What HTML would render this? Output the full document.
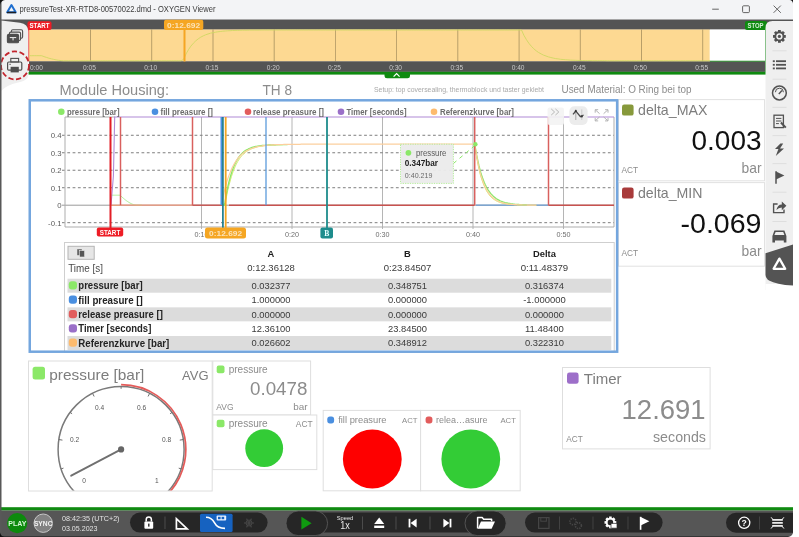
<!DOCTYPE html>
<html lang="en"><head><meta charset="utf-8"><title>pressureTest-XR-RTD8-00570022.dmd - OXYGEN Viewer</title>
<style>
html,body{margin:0;padding:0;background:#fff;overflow:hidden}
body{width:799px;height:537px;font-family:"Liberation Sans", sans-serif}
svg{display:block;position:absolute;left:0;top:0;filter:blur(0.35px)}
svg text{font-family:"Liberation Sans", sans-serif}
</style></head><body>
<svg width="799" height="537" viewBox="0 0 799 537">
<rect x="0" y="0" width="799" height="537" fill="#fff"/>
<rect x="0" y="0" width="793" height="19.5" fill="#f3f4f6"/>
<path d="M11.45,5 L15.7,12.3 L7.2,12.3 Z" fill="none" stroke="#1f6fd0" stroke-width="2" stroke-linejoin="round"/>
<path d="M7.6,12.5 L15.3,12.5" fill="none" stroke="#1c1f26" stroke-width="1.7" stroke-linecap="round"/>
<text x="19.5" y="12.2" font-size="8.4" fill="#3c3c3c" textLength="196" lengthAdjust="spacingAndGlyphs">pressureTest-XR-RTD8-00570022.dmd - OXYGEN Viewer</text>
<line x1="712.2" y1="9.2" x2="718.8" y2="9.2" stroke="#555" stroke-width="0.9"/>
<rect x="742.6" y="5.8" width="6.8" height="6.8" fill="none" rx="1" stroke="#555" stroke-width="0.9"/>
<path d="M773.6,5.6 L780.8,12.8 M780.8,5.6 L773.6,12.8" stroke="#555" stroke-width="0.9" fill="none"/>
<rect x="0" y="19.5" width="793" height="10.2" fill="#545454"/>
<rect x="29" y="29.5" width="680.8" height="32" fill="#fdd992"/>
<rect x="709.8" y="29.5" width="56.2" height="32" fill="#fff"/>
<rect x="29" y="61.3" width="737" height="10.6" fill="#545454"/>
<rect x="28.5" y="71.8" width="737.5" height="2.8" fill="#0f8a10"/>
<line x1="709.8" y1="61.2" x2="766" y2="61.2" stroke="#0f8a10" stroke-width="0.8"/>
<line x1="28.7" y1="27" x2="28.7" y2="61.3" stroke="#ea3a3a" stroke-width="1"/>
<line x1="765.6" y1="29.5" x2="765.6" y2="72" stroke="#0f8a10" stroke-width="1"/>
<line x1="90.5" y1="29.5" x2="90.5" y2="61.3" stroke="#7a6a44" stroke-width="0.7" opacity="0.75"/>
<text x="89.5" y="69.6" font-size="6.6" fill="#c9c9c9" text-anchor="middle">0:05</text>
<line x1="151.7" y1="29.5" x2="151.7" y2="61.3" stroke="#7a6a44" stroke-width="0.7" opacity="0.75"/>
<text x="150.7" y="69.6" font-size="6.6" fill="#c9c9c9" text-anchor="middle">0:10</text>
<line x1="213.0" y1="29.5" x2="213.0" y2="61.3" stroke="#7a6a44" stroke-width="0.7" opacity="0.75"/>
<text x="212.0" y="69.6" font-size="6.6" fill="#c9c9c9" text-anchor="middle">0:15</text>
<line x1="274.2" y1="29.5" x2="274.2" y2="61.3" stroke="#7a6a44" stroke-width="0.7" opacity="0.75"/>
<text x="273.2" y="69.6" font-size="6.6" fill="#c9c9c9" text-anchor="middle">0:20</text>
<line x1="335.4" y1="29.5" x2="335.4" y2="61.3" stroke="#7a6a44" stroke-width="0.7" opacity="0.75"/>
<text x="334.4" y="69.6" font-size="6.6" fill="#c9c9c9" text-anchor="middle">0:25</text>
<line x1="396.6" y1="29.5" x2="396.6" y2="61.3" stroke="#7a6a44" stroke-width="0.7" opacity="0.75"/>
<text x="395.6" y="69.6" font-size="6.6" fill="#c9c9c9" text-anchor="middle">0:30</text>
<line x1="457.8" y1="29.5" x2="457.8" y2="61.3" stroke="#7a6a44" stroke-width="0.7" opacity="0.75"/>
<text x="456.8" y="69.6" font-size="6.6" fill="#c9c9c9" text-anchor="middle">0:35</text>
<line x1="519.1" y1="29.5" x2="519.1" y2="61.3" stroke="#7a6a44" stroke-width="0.7" opacity="0.75"/>
<text x="518.1" y="69.6" font-size="6.6" fill="#c9c9c9" text-anchor="middle">0:40</text>
<line x1="580.3" y1="29.5" x2="580.3" y2="61.3" stroke="#7a6a44" stroke-width="0.7" opacity="0.75"/>
<text x="579.3" y="69.6" font-size="6.6" fill="#c9c9c9" text-anchor="middle">0:45</text>
<line x1="641.5" y1="29.5" x2="641.5" y2="61.3" stroke="#7a6a44" stroke-width="0.7" opacity="0.75"/>
<text x="640.5" y="69.6" font-size="6.6" fill="#c9c9c9" text-anchor="middle">0:50</text>
<line x1="702.7" y1="29.5" x2="702.7" y2="61.3" stroke="#7a6a44" stroke-width="0.7" opacity="0.75"/>
<text x="701.7" y="69.6" font-size="6.6" fill="#c9c9c9" text-anchor="middle">0:55</text>
<text x="30" y="69.6" font-size="6.6" fill="#c9c9c9">0:00</text>
<polyline points="29.3,55.7 31.7,55.7 34.2,55.7 36.6,55.7 39.1,55.7 41.5,55.7 44.0,56.6 46.4,57.4 48.9,58.2 51.3,58.8 53.8,59.4 56.2,59.9 58.7,60.3 61.1,60.6 63.6,60.8 66.0,60.8 68.5,60.8 70.9,60.8 73.4,60.8 75.8,60.8 78.3,60.8 80.7,60.8 83.2,60.8 85.6,60.8 88.1,60.8 90.5,60.8 93.0,60.8 95.4,60.8 97.9,60.8 100.3,60.8 102.8,60.8 105.2,60.8 107.7,60.8 110.1,60.8 112.6,60.8 115.0,60.8 117.4,60.8 119.9,60.8 122.3,60.8 124.8,60.8 127.2,60.8 129.7,60.8 132.1,60.8 134.6,60.8 137.0,60.8 139.5,60.8 141.9,60.8 144.4,60.8 146.8,60.8 149.3,60.8 151.7,60.8 154.2,60.8 156.6,60.8 159.1,60.8 161.5,60.8 164.0,60.8 166.4,60.8 168.9,60.8 171.3,60.8 173.8,60.8 176.2,60.8 178.7,60.8 181.1,60.8 183.6,59.3 186.0,54.0 188.5,49.6 190.9,46.1 193.4,43.2 195.8,40.8 198.3,38.8 200.7,37.2 203.2,35.9 205.6,34.8 208.0,34.0 210.5,33.2 212.9,32.7 215.4,32.2 217.8,31.8 220.3,31.5 222.7,31.2 225.2,31.0 227.6,30.8 230.1,30.7 232.5,30.5 235.0,30.4 237.4,30.4 239.9,30.3 242.3,30.2 244.8,30.2 247.2,30.2 249.7,30.1 252.1,30.1 254.6,30.1 257.0,30.1 259.5,30.1 261.9,30.0 264.4,30.0 266.8,30.0 269.3,30.0 271.7,30.0 274.2,30.0 276.6,30.0 279.1,30.0 281.5,30.0 284.0,30.0 286.4,30.0 288.9,30.0 291.3,30.0 293.7,30.0 296.2,30.0 298.6,30.0 301.1,30.0 303.5,30.0 306.0,30.0 308.4,30.0 310.9,30.0 313.3,30.0 315.8,30.0 318.2,30.0 320.7,30.0 323.1,30.0 325.6,30.0 328.0,30.0 330.5,30.0 332.9,30.0 335.4,30.0 337.8,30.0 340.3,30.0 342.7,30.0 345.2,30.0 347.6,30.0 350.1,30.0 352.5,30.0 355.0,30.0 357.4,30.0 359.9,30.0 362.3,30.0 364.8,30.0 367.2,30.0 369.7,30.0 372.1,30.0 374.6,30.0 377.0,30.0 379.4,30.0 381.9,30.0 384.3,30.0 386.8,30.0 389.2,30.0 391.7,30.0 394.1,30.0 396.6,30.0 399.0,30.0 401.5,30.0 403.9,30.0 406.4,30.0 408.8,30.0 411.3,30.0 413.7,30.0 416.2,30.0 418.6,30.0 421.1,30.0 423.5,30.0 426.0,30.0 428.4,30.0 430.9,30.0 433.3,30.0 435.8,30.0 438.2,30.0 440.7,30.0 443.1,30.0 445.6,30.0 448.0,30.0 450.5,30.0 452.9,30.0 455.4,30.0 457.8,30.0 460.3,30.0 462.7,30.0 465.2,30.0 467.6,30.0 470.0,30.0 472.5,30.0 474.9,30.0 477.4,30.0 479.8,30.0 482.3,30.0 484.7,30.0 487.2,30.0 489.6,30.0 492.1,30.0 494.5,30.0 497.0,30.0 499.4,30.0 501.9,30.0 504.3,30.0 506.8,30.0 509.2,30.0 511.7,30.0 514.1,30.0 516.6,30.0 519.0,30.0 521.5,30.0 523.9,35.3 526.4,39.6 528.8,43.2 531.3,46.2 533.7,48.7 536.2,50.8 538.6,52.5 541.1,53.9 543.5,55.1 546.0,56.0 548.4,56.9 550.9,57.5 553.3,58.1 555.7,58.6 558.2,58.9 560.6,59.3 563.1,59.5 565.5,59.7 568.0,59.9 570.4,60.1 572.9,60.2 575.3,60.3 577.8,60.4 580.2,60.5 582.7,60.5 585.1,60.6 587.6,60.6 590.0,60.6 592.5,60.7 594.9,60.7 597.4,60.7 599.8,60.7 602.3,60.7 604.7,60.7 607.2,60.8 609.6,60.8 612.1,60.8 614.5,60.8 617.0,60.8 619.4,60.8 621.9,60.8 624.3,60.8 626.8,60.8 629.2,60.8 631.7,60.8 634.1,60.8 636.6,60.8 639.0,60.8 641.5,60.8 643.9,60.8 646.3,60.8 648.8,60.8 651.2,60.8 653.7,60.8 656.1,60.8 658.6,60.8 661.0,60.8 663.5,60.8 665.9,60.8 668.4,60.8 670.8,60.8 673.3,60.8 675.7,60.8 678.2,60.8 680.6,60.8 683.1,60.8 685.5,60.8 688.0,60.8 690.4,60.8 692.9,60.8 695.3,60.8 697.8,60.8 700.2,60.8 702.7,60.8 705.1,60.8 707.6,60.8 710.0,60.8" fill="none" stroke="#cfd862" stroke-width="0.9"/>
<rect x="27.5" y="21.3" width="24" height="8.6" fill="#ee1c25" rx="2"/>
<text x="39.5" y="28.3" font-size="6.3" fill="#fff" text-anchor="middle" font-weight="bold" textLength="20" lengthAdjust="spacingAndGlyphs">START</text>
<rect x="745" y="21" width="22" height="9" fill="#0f8a10" rx="2"/>
<text x="755.5" y="28.2" font-size="6.3" fill="#d8f0d8" text-anchor="middle" font-weight="bold" textLength="16" lengthAdjust="spacingAndGlyphs">STOP</text>
<rect x="183.5" y="29.5" width="2" height="32" fill="#f5a623"/>
<rect x="164" y="19.7" width="39.3" height="10.4" fill="#f5a623" rx="2"/>
<text x="183.6" y="27.9" font-size="7.4" fill="#fce3b8" text-anchor="middle" font-weight="bold" textLength="33" lengthAdjust="spacingAndGlyphs">0:12.692</text>
<path d="M384.5,74 L410,74 L410,76 Q410,78.2 407.5,78.2 L387,78.2 Q384.5,78.2 384.5,76 Z" fill="#0f8a10"/>
<path d="M393.6,76.6 L396.6,73.6 L399.6,76.6" fill="none" stroke="#fff" stroke-width="1.2"/>
<path d="M1.2,20.6 L20,22.8 Q28.2,23.8 28.2,31.5 L28.2,75.5 Q28.2,79.6 22,81.4 Q5,85.2 1.2,91 Z" fill="#efefef"/>
<rect x="11.4" y="29.799999999999997" width="11.2" height="8.4" fill="#efefef" rx="1.4" stroke="#4e4e4e" stroke-width="1.1"/>
<rect x="9.4" y="32.1" width="11.2" height="8.4" fill="#efefef" rx="1.4" stroke="#4e4e4e" stroke-width="1.1"/>
<rect x="7.4" y="34.4" width="11.2" height="8.4" fill="#4e4e4e" rx="1.4" stroke="#4e4e4e" stroke-width="1.1"/>
<rect x="9.8" y="37" width="6.4" height="1.1" fill="#e4e4e4"/>
<rect x="12.5" y="37" width="1.1" height="3.4" fill="#e4e4e4"/>
<circle cx="15" cy="65.4" r="14" fill="none" stroke="#c2242c" stroke-width="1.8" stroke-dasharray="5.2 2.6"/>
<rect x="7.6" y="62" width="14.2" height="8.2" fill="none" rx="1.2" stroke="#4e4e4e" stroke-width="1.2"/>
<rect x="10.8" y="58.4" width="7.8" height="3.6" fill="none" stroke="#4e4e4e" stroke-width="1.1"/>
<rect x="10.6" y="66.8" width="8.2" height="5.6" fill="#4e4e4e"/>
<rect x="9.4" y="63.8" width="1.4" height="1" fill="#4e4e4e"/>
<path d="M765.5,290 L765.5,28 Q765.5,21 772.5,21 L793,21 L793,290 Z" fill="#efefef"/>
<rect x="765.5" y="284" width="27.5" height="10" fill="#fff"/>
<path d="M765.5,253.2 L793,244.4 L793,285.6 Q776,284.5 769,280.4 Q765.5,278.2 765.5,274.5 Z" fill="#545454"/>
<line x1="772.5" y1="50.8" x2="786.5" y2="50.8" stroke="#d9d9d9" stroke-width="0.8"/>
<line x1="772.5" y1="79.2" x2="786.5" y2="79.2" stroke="#d9d9d9" stroke-width="0.8"/>
<line x1="772.5" y1="107.4" x2="786.5" y2="107.4" stroke="#d9d9d9" stroke-width="0.8"/>
<line x1="772.5" y1="135.6" x2="786.5" y2="135.6" stroke="#d9d9d9" stroke-width="0.8"/>
<line x1="772.5" y1="163.6" x2="786.5" y2="163.6" stroke="#d9d9d9" stroke-width="0.8"/>
<line x1="772.5" y1="192.2" x2="786.5" y2="192.2" stroke="#d9d9d9" stroke-width="0.8"/>
<line x1="772.5" y1="221.5" x2="786.5" y2="221.5" stroke="#d9d9d9" stroke-width="0.8"/>
<g transform="translate(779.4,36.4)">
<rect x="-1.4" y="-6.4" width="2.8" height="2.8" fill="#525252" transform="rotate(0)"/>
<rect x="-1.4" y="-6.4" width="2.8" height="2.8" fill="#525252" transform="rotate(45)"/>
<rect x="-1.4" y="-6.4" width="2.8" height="2.8" fill="#525252" transform="rotate(90)"/>
<rect x="-1.4" y="-6.4" width="2.8" height="2.8" fill="#525252" transform="rotate(135)"/>
<rect x="-1.4" y="-6.4" width="2.8" height="2.8" fill="#525252" transform="rotate(180)"/>
<rect x="-1.4" y="-6.4" width="2.8" height="2.8" fill="#525252" transform="rotate(225)"/>
<rect x="-1.4" y="-6.4" width="2.8" height="2.8" fill="#525252" transform="rotate(270)"/>
<rect x="-1.4" y="-6.4" width="2.8" height="2.8" fill="#525252" transform="rotate(315)"/>
<circle r="4.1" fill="none" stroke="#525252" stroke-width="1.9"/><circle r="1.6" fill="#525252"/></g>
<rect x="772.8" y="60.3" width="2" height="1.8" fill="#525252"/>
<rect x="776.0" y="60.3" width="10" height="1.8" fill="#525252"/>
<rect x="772.8" y="63.9" width="2" height="1.8" fill="#525252"/>
<rect x="776.0" y="63.9" width="10" height="1.8" fill="#525252"/>
<rect x="772.8" y="67.49999999999999" width="2" height="1.8" fill="#525252"/>
<rect x="776.0" y="67.49999999999999" width="10" height="1.8" fill="#525252"/>
<circle cx="779.4" cy="93" r="6.9" fill="none" stroke="#525252" stroke-width="1.5"/>
<path d="M778.8,94 L782.0,90.6" stroke="#525252" stroke-width="1.4"/>
<path d="M775.4,92.2 A4,4 0 0 1 783.4,92.2" fill="none" stroke="#525252" stroke-width="1"/>
<rect x="774.0" y="115.2" width="9.4" height="12.4" fill="none" stroke="#525252" stroke-width="1.3"/>
<line x1="776.0" y1="118.4" x2="781.4" y2="118.4" stroke="#525252" stroke-width="1"/>
<line x1="776.0" y1="121" x2="781.4" y2="121" stroke="#525252" stroke-width="1"/>
<line x1="776.0" y1="123.6" x2="778.9" y2="123.6" stroke="#525252" stroke-width="1"/>
<path d="M780.9,122.5 L785.8,127.6" stroke="#525252" stroke-width="2"/>
<path d="M780.4,143.4 L775.0,149 L778.4,149 L775.8,156 L784.0,148.6 L780.0,148.6 L783.1999999999999,143.4 Z" fill="#525252"/>
<path d="M776.0,171.2 L776.0,183.8" stroke="#525252" stroke-width="1.5"/>
<path d="M776.0,171.4 L784.4,175.4 L776.0,179.4 Z" fill="#525252"/>
<path d="M777.6,204 L773.6,204 L773.6,212.6 L784.0,212.6 L784.0,209.4" fill="none" stroke="#525252" stroke-width="1.4"/>
<path d="M776.4,210 Q777.4,204.4 781.8,204.4 L781.8,201.4 L786.4,205.8 L781.8,210.2 L781.8,207.4 Q778.4,207.4 776.4,210 Z" fill="#525252"/>
<path d="M772.4,236 L774.4,230.6 L784.4,230.6 L786.4,236 L786.4,242.6 L783.8,242.6 L783.8,240.6 L775.0,240.6 L775.0,242.6 L772.4,242.6 Z" fill="#525252"/>
<path d="M774.4,235 L775.6,232 L783.1999999999999,232 L784.4,235 Z" fill="#efefef"/>
<path d="M779.4,258.6 L785.1999999999999,268.8 L773.6,268.8 Z" fill="none" stroke="#fff" stroke-width="2.3" stroke-linejoin="round"/>
<text x="59.5" y="94.6" font-size="14.8" fill="#8c8c8c" textLength="109.5" lengthAdjust="spacingAndGlyphs">Module Housing:</text>
<text x="262.5" y="94.6" font-size="14.8" fill="#8c8c8c" textLength="29.5" lengthAdjust="spacingAndGlyphs">TH 8</text>
<text x="374" y="91.6" font-size="6.4" fill="#a9a9a9" textLength="170" lengthAdjust="spacingAndGlyphs">Setup: top coversealing, thermoblock und taster geklebt</text>
<text x="561.5" y="92.6" font-size="10.2" fill="#8c8c8c" textLength="130" lengthAdjust="spacingAndGlyphs">Used Material: O Ring bei top</text>
<rect x="618.5" y="99.6" width="146" height="81.2" fill="#fff" stroke="#e2e2e2" stroke-width="1"/>
<rect x="622" y="104.6" width="11.6" height="11" fill="#87993b" rx="2.2"/>
<text x="638" y="115" font-size="14.6" fill="#7d7d7d" textLength="69.4" lengthAdjust="spacingAndGlyphs">delta_MAX</text>
<text x="761.5" y="150.4" font-size="27.4" fill="#111" text-anchor="end" textLength="70" lengthAdjust="spacingAndGlyphs">0.003</text>
<text x="621.4" y="173.4" font-size="9.3" fill="#8c8c8c" textLength="16.6" lengthAdjust="spacingAndGlyphs">ACT</text>
<text x="761.5" y="173.2" font-size="14.2" fill="#8c8c8c" text-anchor="end" textLength="20" lengthAdjust="spacingAndGlyphs">bar</text>
<rect x="618.5" y="182.6" width="146" height="83.6" fill="#fff" stroke="#e2e2e2" stroke-width="1"/>
<rect x="622" y="187.6" width="11.6" height="11" fill="#a83a3a" rx="2.2"/>
<text x="638" y="198" font-size="14.6" fill="#7d7d7d" textLength="64.5" lengthAdjust="spacingAndGlyphs">delta_MIN</text>
<text x="761.5" y="233.4" font-size="27.4" fill="#111" text-anchor="end" textLength="81" lengthAdjust="spacingAndGlyphs">-0.069</text>
<text x="621.4" y="256.4" font-size="9.3" fill="#8c8c8c" textLength="16.6" lengthAdjust="spacingAndGlyphs">ACT</text>
<text x="761.5" y="256.2" font-size="14.2" fill="#8c8c8c" text-anchor="end" textLength="20" lengthAdjust="spacingAndGlyphs">bar</text>
<rect x="65" y="117" width="549" height="110" fill="#fff"/>
<line x1="201.5" y1="117" x2="201.5" y2="229" stroke="#b5b5b5" stroke-width="1"/>
<line x1="292.0" y1="117" x2="292.0" y2="229" stroke="#b5b5b5" stroke-width="1"/>
<line x1="382.5" y1="117" x2="382.5" y2="229" stroke="#b5b5b5" stroke-width="1"/>
<line x1="473.0" y1="117" x2="473.0" y2="229" stroke="#b5b5b5" stroke-width="1"/>
<line x1="563.5" y1="117" x2="563.5" y2="229" stroke="#b5b5b5" stroke-width="1"/>
<line x1="62" y1="135.28" x2="614" y2="135.28" stroke="#7e7e7e" stroke-width="1" stroke-dasharray="2.8 2.5"/>
<line x1="62" y1="152.76" x2="614" y2="152.76" stroke="#7e7e7e" stroke-width="1" stroke-dasharray="2.8 2.5"/>
<line x1="62" y1="170.24" x2="614" y2="170.24" stroke="#7e7e7e" stroke-width="1" stroke-dasharray="2.8 2.5"/>
<line x1="62" y1="187.72" x2="614" y2="187.72" stroke="#7e7e7e" stroke-width="1" stroke-dasharray="2.8 2.5"/>
<line x1="62" y1="222.68" x2="614" y2="222.68" stroke="#7e7e7e" stroke-width="1" stroke-dasharray="2.8 2.5"/>
<line x1="62" y1="205.2" x2="614" y2="205.2" stroke="#9a9a9a" stroke-width="1"/>
<text x="61.5" y="138.1" font-size="7.8" fill="#5c5c5c" text-anchor="end">0.4</text>
<text x="61.5" y="155.6" font-size="7.8" fill="#5c5c5c" text-anchor="end">0.3</text>
<text x="61.5" y="173.0" font-size="7.8" fill="#5c5c5c" text-anchor="end">0.2</text>
<text x="61.5" y="190.5" font-size="7.8" fill="#5c5c5c" text-anchor="end">0.1</text>
<text x="61.5" y="208.0" font-size="7.8" fill="#5c5c5c" text-anchor="end">0</text>
<text x="61.5" y="225.5" font-size="7.8" fill="#5c5c5c" text-anchor="end">-0.1</text>
<path d="M65,117 L65,227 L614,227 L614,117" fill="none" stroke="#adadad" stroke-width="1"/>
<text x="201.5" y="236.6" font-size="7.2" fill="#6e6e6e" text-anchor="middle">0:10</text>
<text x="292.0" y="236.6" font-size="7.2" fill="#6e6e6e" text-anchor="middle">0:20</text>
<text x="382.5" y="236.6" font-size="7.2" fill="#6e6e6e" text-anchor="middle">0:30</text>
<text x="473.0" y="236.6" font-size="7.2" fill="#6e6e6e" text-anchor="middle">0:40</text>
<text x="563.5" y="236.6" font-size="7.2" fill="#6e6e6e" text-anchor="middle">0:50</text>
<line x1="476" y1="205.2" x2="548.5" y2="205.2" stroke="#6d9fd6" stroke-width="1.2"/>
<polyline points="222.3,205.2 223.2,205.2 224.1,205.2 225.0,205.2 225.9,199.9 226.8,195.1 227.7,190.7 228.6,186.7 229.6,183.0 230.5,179.7 231.4,176.6 232.3,173.9 233.2,171.3 234.1,169.0 235.0,166.9 235.9,164.9 236.8,163.1 237.7,161.5 238.6,160.1 239.5,158.7 240.4,157.5 241.3,156.4 242.2,155.3 243.1,154.4 244.0,153.5 244.9,152.8 245.8,152.0 246.7,151.4 247.7,150.8 248.6,150.3 249.5,149.8 250.4,149.3 251.3,148.9 252.2,148.5 253.1,148.2 254.0,147.9 254.9,147.6 255.8,147.3 256.7,147.1 257.6,146.8 258.5,146.6 259.4,146.5 260.3,146.3 261.2,146.1 262.1,146.0 263.0,145.9 263.9,145.8 264.9,145.7 265.8,145.6 266.7,145.5 267.6,145.4 268.5,145.3 269.4,145.2 270.3,145.2 271.2,145.1 272.1,145.1 273.0,145.0 273.9,145.0 274.8,145.0 275.7,144.9 276.6,144.9 277.5,144.9 278.4,144.8 279.3,144.8 280.2,144.8 281.1,144.8 282.0,144.7 283.0,144.7" fill="none" stroke="#d3ea6a" stroke-width="1.0" opacity="1" stroke-linejoin="round"/>
<polyline points="473.9,144.5 474.8,144.5 475.7,150.9 476.6,156.6 477.5,161.7 478.4,166.3 479.3,170.4 480.2,174.1 481.1,177.3 482.1,180.3 483.0,182.9 483.9,185.2 484.8,187.3 485.7,189.2 486.6,190.9 487.5,192.4 488.4,193.7 489.3,194.9 490.2,196.0 491.1,197.0 492.0,197.9 492.9,198.6 493.8,199.3 494.7,199.9 495.6,200.5 496.5,201.0 497.4,201.4 498.3,201.8 499.2,202.2 500.2,202.5 501.1,202.8 502.0,203.0 502.9,203.3 503.8,203.5 504.7,203.6 505.6,203.8 506.5,204.0 507.4,204.1 508.3,204.2 509.2,204.3 510.1,204.4 511.0,204.5 511.9,204.6 512.8,204.6 513.7,204.7 514.6,204.7 515.5,204.8 516.4,204.8 517.3,204.9 518.3,204.9 519.2,204.9 520.1,205.0 521.0,205.0 521.9,205.0 522.8,205.0 523.7,205.0 524.6,205.1 525.5,205.1 526.4,205.1 527.3,205.1 528.2,205.1 529.1,205.1 530.0,205.1 530.9,205.1 531.8,205.1 532.7,205.2 533.6,205.2 534.5,205.2 535.4,205.2 536.4,205.2" fill="none" stroke="#d3ea6a" stroke-width="1.0" opacity="1" stroke-linejoin="round"/>
<polyline points="111.0,195.2 111.9,195.2 112.8,195.2 113.7,195.2 114.6,195.2 115.5,195.2 116.4,195.2 117.3,195.2 118.2,195.2 119.1,195.2 120.0,195.2 121.0,196.1 121.9,196.9 122.8,197.8 123.7,198.5 124.6,199.3 125.5,200.0 126.4,200.7 127.3,201.3 128.2,201.9 129.1,202.5 130.0,203.0 130.9,203.5 131.8,203.9 132.7,204.3 133.6,204.6 134.5,204.9 135.4,205.1 136.3,205.2 137.2,205.2 138.2,205.2 139.1,205.2 140.0,205.2 140.9,205.2 141.8,205.2" fill="none" stroke="#aef094" stroke-width="1.0" opacity="1" stroke-linejoin="round"/>
<polyline points="222.3,205.2 223.2,205.2 224.1,205.2 225.0,202.2 225.9,196.8 226.8,191.8 227.7,187.3 228.6,183.2 229.6,179.5 230.5,176.2 231.4,173.2 232.3,170.5 233.2,168.0 234.1,165.8 235.0,163.8 235.9,161.9 236.8,160.3 237.7,158.8 238.6,157.4 239.5,156.2 240.4,155.1 241.3,154.1 242.2,153.2 243.1,152.4 244.0,151.6 244.9,150.9 245.8,150.3 246.7,149.8 247.7,149.3 248.6,148.8 249.5,148.4 250.4,148.1 251.3,147.7 252.2,147.4 253.1,147.1 254.0,146.9 254.9,146.7 255.8,146.5 256.7,146.3 257.6,146.1 258.5,146.0 259.4,145.8 260.3,145.7 261.2,145.6 262.1,145.5 263.0,145.4 263.9,145.3 264.9,145.3 265.8,145.2 266.7,145.1 267.6,145.1 268.5,145.0 269.4,145.0 270.3,144.9 271.2,144.9 272.1,144.9 273.0,144.8 273.9,144.8 274.8,144.8 275.7,144.8 276.6,144.7 277.5,144.7 278.4,144.7 279.3,144.7 280.2,144.7 281.1,144.7 282.0,144.7 283.0,144.6 283.9,144.6 284.8,144.6 285.7,144.6 286.6,144.6 287.5,144.6" fill="none" stroke="#8be868" stroke-width="1.3" opacity="1" stroke-linejoin="round"/>
<polyline points="474.4,144.5 475.3,147.3 476.2,152.5 477.1,157.2 478.0,161.5 478.9,165.4 479.8,168.9 480.7,172.2 481.6,175.1 482.5,177.8 483.4,180.2 484.3,182.5 485.2,184.5 486.1,186.3 487.0,188.0 487.9,189.6 488.8,191.0 489.7,192.2 490.6,193.4 491.6,194.4 492.5,195.4 493.4,196.3 494.3,197.1 495.2,197.8 496.1,198.5 497.0,199.1 497.9,199.6 498.8,200.1 499.7,200.6 500.6,201.0 501.5,201.3 502.4,201.7 503.3,202.0 504.2,202.3 505.1,202.6 506.0,202.8 506.9,203.0 507.8,203.2 508.7,203.4 509.7,203.5 510.6,203.7 511.5,203.8 512.4,203.9 513.3,204.1 514.2,204.2 515.1,204.3 516.0,204.3 516.9,204.4 517.8,204.5 518.7,204.5 519.6,204.6 520.5,204.7 521.4,204.7 522.3,204.8 523.2,204.8 524.1,204.8 525.0,204.9 525.9,204.9 526.8,204.9" fill="none" stroke="#8be868" stroke-width="1.3" opacity="1" stroke-linejoin="round"/>
<polyline points="220.5,205.2 221.4,205.2 222.3,200.5 223.2,196.2 224.1,192.2 225.0,188.5 225.9,185.1 226.8,181.9 227.7,179.0 228.6,176.4 229.6,173.9 230.5,171.6 231.4,169.5 232.3,167.6 233.2,165.8 234.1,164.1 235.0,162.6 235.9,161.2 236.8,159.9 237.7,158.6 238.6,157.5 239.5,156.5 240.4,155.6 241.3,154.7 242.2,153.9 243.1,153.1 244.0,152.5 244.9,151.8 245.8,151.2 246.7,150.7 247.7,150.2 248.6,149.7 249.5,149.3 250.4,148.9 251.3,148.5 252.2,148.2 253.1,147.9 254.0,147.6 254.9,147.4 255.8,147.1 256.7,146.9 257.6,146.7 258.5,146.5 259.4,146.3 260.3,146.2 261.2,146.0 262.1,145.9 263.0,145.7 263.9,145.6 264.9,145.5 265.8,145.4 266.7,145.3 267.6,145.2 268.5,145.1 269.4,145.1 270.3,145.0 271.2,144.9 272.1,144.9 273.0,144.8 273.9,144.8 274.8,144.7 275.7,144.7 276.6,144.7 277.5,144.6 278.4,144.6 279.3,144.6 280.2,144.5 281.1,144.5 282.0,144.5 283.0,144.5 283.9,144.4 284.8,144.4 285.7,144.4 286.6,144.4 287.5,144.4 288.4,144.4 289.3,144.3 290.2,144.3 291.1,144.3 292.0,144.3 292.9,144.3 293.8,144.3 294.7,144.3 295.6,144.3 296.5,144.3 297.4,144.3 298.3,144.3 299.2,144.3 300.1,144.3 301.1,144.2 302.0,144.2 302.9,144.2 303.8,144.2 304.7,144.2 305.6,144.2 306.5,144.2 307.4,144.2 308.3,144.2 309.2,144.2 310.1,144.2 311.0,144.2 311.9,144.2 312.8,144.2 313.7,144.2 314.6,144.2 315.5,144.2 316.4,144.2 317.3,144.2 318.2,144.2 319.2,144.2 320.1,144.2 321.0,144.2 321.9,144.2 322.8,144.2 323.7,144.2 324.6,144.2 325.5,144.2 326.4,144.2 327.3,144.2 328.2,144.2 329.1,144.2 330.0,144.2 330.9,144.2 331.8,144.2 332.7,144.2 333.6,144.2 334.5,144.2 335.4,144.2 336.3,144.2 337.3,144.2 338.2,144.2 339.1,144.2 340.0,144.2 340.9,144.2 341.8,144.2 342.7,144.2 343.6,144.2 344.5,144.2 345.4,144.2 346.3,144.2 347.2,144.2 348.1,144.2 349.0,144.2 349.9,144.2 350.8,144.2 351.7,144.2 352.6,144.2 353.5,144.2 354.4,144.2 355.4,144.2 356.3,144.2 357.2,144.2 358.1,144.2 359.0,144.2 359.9,144.2 360.8,144.2 361.7,144.2 362.6,144.2 363.5,144.2 364.4,144.2 365.3,144.2 366.2,144.2 367.1,144.2 368.0,144.2 368.9,144.2 369.8,144.2 370.7,144.2 371.6,144.2 372.5,144.2 373.5,144.2 374.4,144.2 375.3,144.2 376.2,144.2 377.1,144.2 378.0,144.2 378.9,144.2 379.8,144.2 380.7,144.2 381.6,144.2 382.5,144.2 383.4,144.2 384.3,144.2 385.2,144.2 386.1,144.2 387.0,144.2 387.9,144.2 388.8,144.2 389.7,144.2 390.6,144.2 391.6,144.2 392.5,144.2 393.4,144.2 394.3,144.2 395.2,144.2 396.1,144.2 397.0,144.2 397.9,144.2 398.8,144.2 399.7,144.2 400.6,144.2 401.5,144.2 402.4,144.2 403.3,144.2 404.2,144.2 405.1,144.2 406.0,144.2 406.9,144.2 407.8,144.2 408.7,144.2 409.7,144.2 410.6,144.2 411.5,144.2 412.4,144.2 413.3,144.2 414.2,144.2 415.1,144.2 416.0,144.2 416.9,144.2 417.8,144.2 418.7,144.2 419.6,144.2 420.5,144.2 421.4,144.2 422.3,144.2 423.2,144.2 424.1,144.2 425.0,144.2 425.9,144.2 426.8,144.2 427.8,144.2 428.7,144.2 429.6,144.2 430.5,144.2 431.4,144.2 432.3,144.2 433.2,144.2 434.1,144.2 435.0,144.2 435.9,144.2 436.8,144.2 437.7,144.2 438.6,144.2 439.5,144.2 440.4,144.2 441.3,144.2 442.2,144.2 443.1,144.2 444.0,144.2 444.9,144.2 445.9,144.2 446.8,144.2 447.7,144.2 448.6,144.2 449.5,144.2 450.4,144.2 451.3,144.2 452.2,144.2 453.1,144.2 454.0,144.2 454.9,144.2 455.8,144.2 456.7,144.2 457.6,144.2 458.5,144.2 459.4,144.2 460.3,144.2 461.2,144.2 462.1,144.2 463.0,144.2 464.0,144.2 464.9,144.2 465.8,144.2 466.7,144.2 467.6,144.2 468.5,144.2 469.4,144.2 470.3,144.2 471.2,144.2 472.1,144.2 473.0,144.2 473.9,144.2 474.8,144.2 475.7,150.3 476.6,155.8 477.5,160.7 478.4,165.2 479.3,169.2 480.2,172.8 481.1,176.0 482.1,178.9 483.0,181.5 483.9,183.9 484.8,186.0 485.7,188.0 486.6,189.7 487.5,191.2 488.4,192.6 489.3,193.9 490.2,195.0 491.1,196.0 492.0,196.9 492.9,197.8 493.8,198.5 494.7,199.2 495.6,199.8 496.5,200.3 497.4,200.8 498.3,201.2 499.2,201.6 500.2,202.0 501.1,202.3 502.0,202.6 502.9,202.9 503.8,203.1 504.7,203.3 505.6,203.5 506.5,203.7 507.4,203.8 508.3,204.0 509.2,204.1 510.1,204.2 511.0,204.3 511.9,204.4 512.8,204.5 513.7,204.5 514.6,204.6 515.5,204.7 516.4,204.7 517.3,204.8 518.3,204.8 519.2,204.8 520.1,204.9 521.0,204.9 521.9,204.9 522.8,205.0 523.7,205.0 524.6,205.0 525.5,205.0 526.4,205.0 527.3,205.1 528.2,205.1 529.1,205.1 530.0,205.1 530.9,205.1 531.8,205.1 532.7,205.1 533.6,205.1 534.5,205.1 535.4,205.1 536.4,205.2" fill="none" stroke="#fccf9e" stroke-width="1.2" opacity="1" stroke-linejoin="round"/>
<line x1="111.0" y1="205.2" x2="120.5" y2="205.2" stroke="#ee9a70" stroke-width="1.2"/>
<line x1="120.5" y1="205.2" x2="192.5" y2="205.2" stroke="#ee9478" stroke-width="1.3"/>
<line x1="192.5" y1="205.2" x2="222" y2="205.2" stroke="#c8524f" stroke-width="1.4"/>
<line x1="229" y1="205.2" x2="474.5" y2="205.2" stroke="#c8524f" stroke-width="1.4"/>
<line x1="548.5" y1="205.2" x2="614" y2="205.2" stroke="#c8524f" stroke-width="1.4"/>
<line x1="65" y1="117" x2="115" y2="117" stroke="#adadad" stroke-width="1"/>
<polyline points="111.0,205.2 113.4,176 114.7,117 614,117" fill="none" stroke="#b08ad6" stroke-width="1.1"/>
<line x1="120.5" y1="117" x2="120.5" y2="205.2" stroke="#d9605e" stroke-width="1.5"/>
<line x1="192.5" y1="117" x2="192.5" y2="205.2" stroke="#d9605e" stroke-width="1.5"/>
<line x1="474.7" y1="117" x2="474.7" y2="205.2" stroke="#d9605e" stroke-width="1.5"/>
<line x1="548.5" y1="117" x2="548.5" y2="205.2" stroke="#d9605e" stroke-width="1.5"/>
<line x1="221.3" y1="117" x2="221.3" y2="205.2" stroke="#4a8fe0" stroke-width="1.6"/>
<line x1="266" y1="117" x2="266" y2="205.2" stroke="#5b9bdc" stroke-width="1.3"/>
<line x1="110.5" y1="117" x2="110.5" y2="228" stroke="#e21e26" stroke-width="2"/>
<line x1="222.9" y1="117" x2="222.9" y2="228" stroke="#1d7c8e" stroke-width="1.7"/>
<line x1="225.7" y1="117" x2="225.7" y2="228" stroke="#f5a623" stroke-width="1.8"/>
<line x1="327" y1="117" x2="327" y2="228" stroke="#1d8c8c" stroke-width="1.8"/>
<rect x="96.8" y="227.6" width="26.4" height="9" fill="#ee1c25" rx="2"/>
<text x="110" y="234.8" font-size="6.3" fill="#fff" text-anchor="middle" font-weight="bold" textLength="20.5" lengthAdjust="spacingAndGlyphs">START</text>
<rect x="205" y="227.6" width="41" height="10.8" fill="#f5a623" rx="2.5"/>
<text x="225.6" y="236.1" font-size="7.4" fill="#fce3b8" text-anchor="middle" font-weight="bold" textLength="33" lengthAdjust="spacingAndGlyphs">0:12.692</text>
<rect x="320.4" y="227.6" width="12.6" height="10.8" fill="#1d8c8c" rx="2"/>
<text x="326.7" y="236" font-size="7.6" fill="#e6ffff" text-anchor="middle" font-weight="bold" style="font-family:'Liberation Serif',serif">B</text>
<circle cx="61.3" cy="111.8" r="3.3" fill="#8be868"/>
<text x="67" y="114.7" font-size="8.5" fill="#6c6c6c" font-weight="bold" textLength="52.5" lengthAdjust="spacingAndGlyphs">pressure [bar]</text>
<circle cx="155" cy="111.8" r="3.3" fill="#4a8fe0"/>
<text x="160.5" y="114.7" font-size="8.5" fill="#6c6c6c" font-weight="bold" textLength="52.5" lengthAdjust="spacingAndGlyphs">fill preasure []</text>
<circle cx="248" cy="111.8" r="3.3" fill="#e25c5c"/>
<text x="253" y="114.7" font-size="8.5" fill="#6c6c6c" font-weight="bold" textLength="71" lengthAdjust="spacingAndGlyphs">release preasure []</text>
<circle cx="341" cy="111.8" r="3.3" fill="#9a6fc8"/>
<text x="346.5" y="114.7" font-size="8.5" fill="#6c6c6c" font-weight="bold" textLength="60" lengthAdjust="spacingAndGlyphs">Timer [seconds]</text>
<circle cx="434" cy="111.8" r="3.3" fill="#fdbb6e"/>
<text x="440" y="114.7" font-size="8.5" fill="#6c6c6c" font-weight="bold" textLength="74" lengthAdjust="spacingAndGlyphs">Referenzkurve [bar]</text>
<rect x="547.5" y="107.5" width="16.5" height="17.5" fill="#f3f3f3" rx="2" opacity="0.9"/>
<path d="M551.2,108.9 L554.6,112 L551.2,115.1 M555.4,108.9 L558.8,112 L555.4,115.1" fill="none" stroke="#b9b9b9" stroke-width="1"/>
<rect x="569.4" y="106.2" width="18.2" height="18.8" fill="#ececec" rx="5"/>
<path d="M573,114.4 L575.8,111 L580.4,116.6 L583.6,115" fill="none" stroke="#4a4a4a" stroke-width="1.3"/>
<line x1="575.8" y1="109.4" x2="575.8" y2="120" stroke="#8a8a8a" stroke-width="0.7"/>
<line x1="581.8" y1="109.4" x2="581.8" y2="120" stroke="#bcbcbc" stroke-width="0.7"/>
<circle cx="575.8" cy="111.2" r="1.1" fill="#333"/><circle cx="581.8" cy="116.4" r="1.1" fill="#333"/>
<path d="M599.6,113.7 L595.2,109.7 M598.2,109.7 L595.2,109.7 L595.2,112.7" fill="none" stroke="#b4b4b4" stroke-width="1"/>
<path d="M603.6,113.7 L608.0,109.7 M605.0,109.7 L608.0,109.7 L608.0,112.7" fill="none" stroke="#b4b4b4" stroke-width="1"/>
<path d="M599.6,116.89999999999999 L595.2,120.89999999999999 M598.2,120.89999999999999 L595.2,120.89999999999999 L595.2,117.89999999999999" fill="none" stroke="#b4b4b4" stroke-width="1"/>
<path d="M603.6,116.89999999999999 L608.0,120.89999999999999 M605.0,120.89999999999999 L608.0,120.89999999999999 L608.0,117.89999999999999" fill="none" stroke="#b4b4b4" stroke-width="1"/>
<path d="M453.4,163.5 L474,146.2" stroke="#8be868" stroke-width="1" stroke-dasharray="4 4" fill="none"/>
<circle cx="475.4" cy="144.2" r="2.2" fill="#8be868"/>
<rect x="400.5" y="144.2" width="52.9" height="39.2" fill="#ececec" stroke="#a8ec88" stroke-width="0.9" stroke-dasharray="1.2 1.2" opacity="0.95"/>
<circle cx="408.4" cy="152.8" r="2.9" fill="#8be868"/>
<text x="416" y="155.8" font-size="8.6" fill="#5a5a5a" textLength="30.4" lengthAdjust="spacingAndGlyphs">pressure</text>
<text x="404.8" y="166.4" font-size="8.4" fill="#222" font-weight="bold" textLength="33.2" lengthAdjust="spacingAndGlyphs">0.347bar</text>
<text x="404.8" y="177.6" font-size="7.8" fill="#6a6a6a" textLength="27.6" lengthAdjust="spacingAndGlyphs">0:40.219</text>
<rect x="64.5" y="242.5" width="549.7" height="110" fill="#fff" stroke="#cfcfcf" stroke-width="1"/>
<rect x="68" y="246.3" width="26.2" height="13" fill="#e6e6e6" stroke="#b4b4b4" stroke-width="1"/>
<rect x="77.2" y="249.2" width="4.6" height="6" fill="#666"/>
<rect x="79.6" y="250.6" width="5" height="6.4" fill="#555" stroke="#e6e6e6" stroke-width="0.6"/>
<text x="271" y="256.8" font-size="9.4" fill="#1e1e1e" text-anchor="middle" font-weight="bold">A</text>
<text x="407.5" y="256.8" font-size="9.4" fill="#1e1e1e" text-anchor="middle" font-weight="bold">B</text>
<text x="544.4" y="256.8" font-size="9.4" fill="#1e1e1e" text-anchor="middle" font-weight="bold">Delta</text>
<text x="68.2" y="271.6" font-size="10.4" fill="#4a4a4a" textLength="34.8" lengthAdjust="spacingAndGlyphs">Time [s]</text>
<text x="271" y="271.3" font-size="9.3" fill="#3a3a3a" text-anchor="middle" textLength="47.5" lengthAdjust="spacingAndGlyphs">0:12.36128</text>
<text x="407.5" y="271.3" font-size="9.3" fill="#3a3a3a" text-anchor="middle" textLength="47.5" lengthAdjust="spacingAndGlyphs">0:23.84507</text>
<text x="544.4" y="271.3" font-size="9.3" fill="#3a3a3a" text-anchor="middle" textLength="47.5" lengthAdjust="spacingAndGlyphs">0:11.48379</text>
<rect x="67.5" y="278.7" width="543.8" height="14.0" fill="#dcdcdc"/>
<rect x="68.8" y="281.3" width="8.2" height="8.2" fill="#8be868" rx="3"/>
<text x="78.3" y="289.4" font-size="10.2" fill="#242424" font-weight="bold" textLength="64.3" lengthAdjust="spacingAndGlyphs">pressure [bar]</text>
<text x="271" y="289.0" font-size="9.3" fill="#3a3a3a" text-anchor="middle" textLength="39" lengthAdjust="spacingAndGlyphs">0.032377</text>
<text x="407.5" y="289.0" font-size="9.3" fill="#3a3a3a" text-anchor="middle" textLength="39" lengthAdjust="spacingAndGlyphs">0.348751</text>
<text x="544.4" y="289.0" font-size="9.3" fill="#3a3a3a" text-anchor="middle" textLength="39" lengthAdjust="spacingAndGlyphs">0.316374</text>
<rect x="68.8" y="295.62" width="8.2" height="8.2" fill="#4a8fe0" rx="3"/>
<text x="78.3" y="303.72" font-size="10.2" fill="#242424" font-weight="bold" textLength="64.5" lengthAdjust="spacingAndGlyphs">fill preasure []</text>
<text x="271" y="303.32" font-size="9.3" fill="#3a3a3a" text-anchor="middle" textLength="39" lengthAdjust="spacingAndGlyphs">1.000000</text>
<text x="407.5" y="303.32" font-size="9.3" fill="#3a3a3a" text-anchor="middle" textLength="39" lengthAdjust="spacingAndGlyphs">0.000000</text>
<text x="544.4" y="303.32" font-size="9.3" fill="#3a3a3a" text-anchor="middle" textLength="42.5" lengthAdjust="spacingAndGlyphs">-1.000000</text>
<rect x="67.5" y="307.34" width="543.8" height="14.0" fill="#dcdcdc"/>
<rect x="68.8" y="309.94" width="8.2" height="8.2" fill="#e25c5c" rx="3"/>
<text x="78.3" y="318.04" font-size="10.2" fill="#242424" font-weight="bold" textLength="84.5" lengthAdjust="spacingAndGlyphs">release preasure []</text>
<text x="271" y="317.64" font-size="9.3" fill="#3a3a3a" text-anchor="middle" textLength="39" lengthAdjust="spacingAndGlyphs">0.000000</text>
<text x="407.5" y="317.64" font-size="9.3" fill="#3a3a3a" text-anchor="middle" textLength="39" lengthAdjust="spacingAndGlyphs">0.000000</text>
<text x="544.4" y="317.64" font-size="9.3" fill="#3a3a3a" text-anchor="middle" textLength="39" lengthAdjust="spacingAndGlyphs">0.000000</text>
<rect x="68.8" y="324.26" width="8.2" height="8.2" fill="#9a6fc8" rx="3"/>
<text x="78.3" y="332.36" font-size="10.2" fill="#242424" font-weight="bold" textLength="73" lengthAdjust="spacingAndGlyphs">Timer [seconds]</text>
<text x="271" y="331.96" font-size="9.3" fill="#3a3a3a" text-anchor="middle" textLength="39" lengthAdjust="spacingAndGlyphs">12.36100</text>
<text x="407.5" y="331.96" font-size="9.3" fill="#3a3a3a" text-anchor="middle" textLength="39" lengthAdjust="spacingAndGlyphs">23.84500</text>
<text x="544.4" y="331.96" font-size="9.3" fill="#3a3a3a" text-anchor="middle" textLength="39" lengthAdjust="spacingAndGlyphs">11.48400</text>
<rect x="67.5" y="335.98" width="543.8" height="14.0" fill="#dcdcdc"/>
<rect x="68.8" y="338.58" width="8.2" height="8.2" fill="#fdbb6e" rx="3"/>
<text x="78.3" y="346.68" font-size="10.2" fill="#242424" font-weight="bold" textLength="91" lengthAdjust="spacingAndGlyphs">Referenzkurve [bar]</text>
<text x="271" y="346.28" font-size="9.3" fill="#3a3a3a" text-anchor="middle" textLength="39" lengthAdjust="spacingAndGlyphs">0.026602</text>
<text x="407.5" y="346.28" font-size="9.3" fill="#3a3a3a" text-anchor="middle" textLength="39" lengthAdjust="spacingAndGlyphs">0.348912</text>
<text x="544.4" y="346.28" font-size="9.3" fill="#3a3a3a" text-anchor="middle" textLength="39" lengthAdjust="spacingAndGlyphs">0.322310</text>
<rect x="29.75" y="100.3" width="587.4" height="251.4" fill="none" stroke="#74a6de" stroke-width="2.5"/>
<rect x="28.5" y="361" width="183.7" height="130" fill="#fff" stroke="#dedede" stroke-width="1"/>
<rect x="32.6" y="366.8" width="12.4" height="12.6" fill="#8be868" rx="2.5"/>
<text x="49.3" y="380" font-size="15" fill="#7d7d7d" textLength="95" lengthAdjust="spacingAndGlyphs">pressure [bar]</text>
<text x="182" y="380" font-size="13.6" fill="#7d7d7d" textLength="26.5" lengthAdjust="spacingAndGlyphs">AVG</text>
<clipPath id="gc"><rect x="29" y="361.5" width="182.7" height="129"/></clipPath><g clip-path="url(#gc)">
<path d="M76.55,493.95 A63,63 0 1 1 165.65,493.95" fill="none" stroke="#7a7a7a" stroke-width="1.5"/>
<path d="M121.10,384.70 A64.7,64.7 0 0 1 166.85,495.15" fill="none" stroke="#e45c5a" stroke-width="1.7"/>
<line x1="76.55" y1="493.95" x2="79.10" y2="491.40" stroke="#6e6e6e" stroke-width="1"/>
<line x1="61.18" y1="468.87" x2="63.47" y2="468.13" stroke="#6e6e6e" stroke-width="1"/>
<line x1="58.88" y1="439.54" x2="62.43" y2="440.11" stroke="#6e6e6e" stroke-width="1"/>
<line x1="70.13" y1="412.37" x2="72.07" y2="413.78" stroke="#6e6e6e" stroke-width="1"/>
<line x1="92.50" y1="393.27" x2="94.13" y2="396.47" stroke="#6e6e6e" stroke-width="1"/>
<line x1="121.10" y1="386.40" x2="121.10" y2="388.80" stroke="#6e6e6e" stroke-width="1"/>
<line x1="149.70" y1="393.27" x2="148.07" y2="396.47" stroke="#6e6e6e" stroke-width="1"/>
<line x1="172.07" y1="412.37" x2="170.13" y2="413.78" stroke="#6e6e6e" stroke-width="1"/>
<line x1="183.32" y1="439.54" x2="179.77" y2="440.11" stroke="#6e6e6e" stroke-width="1"/>
<line x1="181.02" y1="468.87" x2="178.73" y2="468.13" stroke="#6e6e6e" stroke-width="1"/>
<line x1="165.65" y1="493.95" x2="163.10" y2="491.40" stroke="#6e6e6e" stroke-width="1"/>
<text x="99.6" y="410.4" font-size="6.6" fill="#555" text-anchor="middle">0.4</text>
<text x="141.5" y="410.4" font-size="6.6" fill="#555" text-anchor="middle">0.6</text>
<text x="74.5" y="442.4" font-size="6.6" fill="#555" text-anchor="middle">0.2</text>
<text x="166.6" y="442.4" font-size="6.6" fill="#555" text-anchor="middle">0.8</text>
<text x="84.2" y="483" font-size="6.6" fill="#555" text-anchor="middle">0</text>
<text x="156.9" y="483" font-size="6.6" fill="#555" text-anchor="middle">1</text>
<line x1="121.1" y1="449.4" x2="71.21" y2="475.70" stroke="#707070" stroke-width="1.9" stroke-linecap="round"/>
<circle cx="121.1" cy="449.4" r="3.1" fill="#666"/>
</g>
<rect x="212.8" y="361" width="97.8" height="54" fill="#fff" stroke="#dedede" stroke-width="1"/>
<rect x="216.7" y="365.6" width="7.8" height="7.6" fill="#8be868" rx="2"/>
<text x="228.7" y="372.5" font-size="10" fill="#8c8c8c" textLength="39" lengthAdjust="spacingAndGlyphs">pressure</text>
<text x="307.4" y="395" font-size="17.6" fill="#8c8c8c" text-anchor="end" textLength="57.4" lengthAdjust="spacingAndGlyphs">0.0478</text>
<text x="216.2" y="409.5" font-size="8.6" fill="#8c8c8c" textLength="17.3" lengthAdjust="spacingAndGlyphs">AVG</text>
<text x="307.6" y="409.5" font-size="9.8" fill="#8c8c8c" text-anchor="end" textLength="14.4" lengthAdjust="spacingAndGlyphs">bar</text>
<rect x="212.8" y="415" width="104" height="54.6" fill="#fff" stroke="#dedede" stroke-width="1"/>
<rect x="216.7" y="419.8" width="7.8" height="7.4" fill="#8be868" rx="2"/>
<text x="228.7" y="426.8" font-size="10" fill="#8c8c8c" textLength="39" lengthAdjust="spacingAndGlyphs">pressure</text>
<text x="295.8" y="426.6" font-size="8.8" fill="#8c8c8c" textLength="16.8" lengthAdjust="spacingAndGlyphs">ACT</text>
<circle cx="264.2" cy="448.2" r="18.9" fill="#33cc36"/>
<rect x="323.2" y="410.4" width="97.4" height="80.4" fill="#fff" stroke="#dedede" stroke-width="1"/>
<rect x="327.3" y="416.6" width="6.8" height="6.8" fill="#4a8fe0" rx="2.6"/>
<text x="338.2" y="423" font-size="8.8" fill="#8c8c8c" textLength="48.4" lengthAdjust="spacingAndGlyphs">fill preasure</text>
<text x="402" y="423" font-size="7.8" fill="#8c8c8c" textLength="15.5" lengthAdjust="spacingAndGlyphs">ACT</text>
<circle cx="372.3" cy="459" r="29.4" fill="#fe0000"/>
<rect x="420.6" y="410.4" width="99.6" height="80.4" fill="#fff" stroke="#dedede" stroke-width="1"/>
<rect x="425.6" y="416.6" width="6.8" height="6.8" fill="#e25c5c" rx="2.6"/>
<text x="436" y="423" font-size="8.8" fill="#8c8c8c" textLength="51.5" lengthAdjust="spacingAndGlyphs">relea…asure</text>
<text x="500.4" y="423" font-size="7.8" fill="#8c8c8c" textLength="15.5" lengthAdjust="spacingAndGlyphs">ACT</text>
<circle cx="470.8" cy="459" r="29.4" fill="#33cc36"/>
<rect x="562.5" y="367.5" width="147.6" height="81.4" fill="#fff" stroke="#dedede" stroke-width="1"/>
<rect x="567" y="372.6" width="11.6" height="11.2" fill="#9d6fc9" rx="2.4"/>
<text x="583.8" y="383.6" font-size="14" fill="#7d7d7d" textLength="37.8" lengthAdjust="spacingAndGlyphs">Timer</text>
<text x="705.6" y="419.3" font-size="27.6" fill="#8c8c8c" text-anchor="end" textLength="84" lengthAdjust="spacingAndGlyphs">12.691</text>
<text x="566.2" y="441.7" font-size="8.6" fill="#8c8c8c" textLength="16.5" lengthAdjust="spacingAndGlyphs">ACT</text>
<text x="706" y="441.7" font-size="14" fill="#8c8c8c" text-anchor="end" textLength="53" lengthAdjust="spacingAndGlyphs">seconds</text>
<rect x="0" y="507.2" width="793" height="3.4" fill="#0f8a10"/>
<rect x="0" y="510.5" width="793" height="26.5" fill="#565656"/>
<circle cx="17.2" cy="523.2" r="10.1" fill="#0c8a0c"/>
<text x="17.3" y="525.8" font-size="7" fill="#d6f5d6" text-anchor="middle" font-weight="bold" textLength="18" lengthAdjust="spacingAndGlyphs">PLAY</text>
<circle cx="43.2" cy="523.2" r="9.2" fill="#828282" stroke="#c6c6c6" stroke-width="1"/>
<text x="43.2" y="525.8" font-size="7" fill="#f2f2f2" text-anchor="middle" font-weight="bold" textLength="18.6" lengthAdjust="spacingAndGlyphs">SYNC</text>
<text x="62" y="521" font-size="8" fill="#e4e4e4" textLength="57.5" lengthAdjust="spacingAndGlyphs">08:42:35 (UTC+2)</text>
<text x="62" y="531.4" font-size="8" fill="#e4e4e4" textLength="35.5" lengthAdjust="spacingAndGlyphs">03.05.2023</text>
<rect x="130" y="512.6" width="137.6" height="20" fill="#262626" rx="10"/>
<rect x="200" y="513.8" width="32.6" height="18.2" fill="#1662c0" rx="1.5"/>
<line x1="165" y1="516.5" x2="165" y2="529" stroke="#555" stroke-width="0.8"/>
<rect x="144.4" y="521.4" width="8.8" height="7.4" fill="#fff" rx="1"/>
<path d="M146.2,521.6 L146.2,519.6 A2.6,2.6 0 0 1 151.4,519.6 L151.4,521.6" fill="none" stroke="#fff" stroke-width="1.5"/>
<rect x="148.1" y="523.6" width="1.4" height="3" fill="#262626"/>
<path d="M176.4,518.6 L176.4,528.8 L187.2,528.8 Z" fill="none" stroke="#fff" stroke-width="1.7" stroke-linejoin="miter"/>
<path d="M178.4,523.6 L181.4,526.8" stroke="#fff" stroke-width="0.1"/>
<path d="M206,517.2 Q211.5,517.2 214.4,522.6 Q217.4,528.4 225,528.4" fill="none" stroke="#fff" stroke-width="1.6"/>
<rect x="216.6" y="515.6" width="9.6" height="5" fill="#e8f0ff" rx="1"/>
<rect x="218" y="516.8" width="2.6" height="2.4" fill="#1662c0"/>
<rect x="221.6" y="516.8" width="2.6" height="2.4" fill="#1662c0"/>
<line x1="244" y1="523" x2="254" y2="523" stroke="#444" stroke-width="1.2" transform="rotate(0 249 523)"/>
<line x1="244" y1="523" x2="254" y2="523" stroke="#444" stroke-width="1.2" transform="rotate(60 249 523)"/>
<line x1="244" y1="523" x2="254" y2="523" stroke="#444" stroke-width="1.2" transform="rotate(120 249 523)"/>
<circle cx="249" cy="523" r="3" fill="none" stroke="#444" stroke-width="1"/>
<rect x="300" y="512.6" width="180" height="20" fill="#262626" rx="10"/>
<rect x="286" y="511" width="41.6" height="24.6" rx="12.3" fill="#262626" stroke="#5e5e5e" stroke-width="0.8"/>
<path d="M301.4,516.8 L311.6,523.2 L301.4,529.6 Z" fill="#0f9a10"/>
<text x="345" y="519.6" font-size="6" fill="#e8e8e8" text-anchor="middle" textLength="16.5" lengthAdjust="spacingAndGlyphs">Speed</text>
<text x="345" y="529.4" font-size="10.4" fill="#e8e8e8" text-anchor="middle" textLength="9.6" lengthAdjust="spacingAndGlyphs">1x</text>
<line x1="362.5" y1="516.5" x2="362.5" y2="529.5" stroke="#555" stroke-width="0.8"/>
<line x1="396" y1="516.5" x2="396" y2="529.5" stroke="#555" stroke-width="0.8"/>
<line x1="430" y1="516.5" x2="430" y2="529.5" stroke="#555" stroke-width="0.8"/>
<path d="M374.2,524 L379.2,517.6 L384.2,524 Z" fill="#fff"/>
<rect x="374.2" y="525.6" width="10" height="2.4" fill="#fff"/>
<rect x="408.6" y="518.8" width="1.8" height="8.6" fill="#fff"/>
<path d="M416.6,518.8 L416.6,527.4 L410.6,523.1 Z" fill="#fff"/>
<rect x="449.6" y="518.8" width="1.8" height="8.6" fill="#fff"/>
<path d="M443.4,518.8 L443.4,527.4 L449.4,523.1 Z" fill="#fff"/>
<rect x="465" y="511" width="41.2" height="24.6" rx="12.3" fill="#262626" stroke="#5e5e5e" stroke-width="0.8"/>
<path d="M477.6,528.6 L477.6,517.6 L482.2,517.6 L483.6,519.2 L491.6,519.2 L491.6,521.2" fill="none" stroke="#fff" stroke-width="1.5" stroke-linejoin="round"/>
<path d="M477.8,528.8 L481,521.6 L495,521.6 L491.6,528.8 Z" fill="#fff"/>
<rect x="525" y="512.6" width="137.6" height="20" fill="#262626" rx="10"/>
<line x1="559.5" y1="516.5" x2="559.5" y2="529.5" stroke="#4a4a4a" stroke-width="0.8"/>
<line x1="593" y1="516.5" x2="593" y2="529.5" stroke="#4a4a4a" stroke-width="0.8"/>
<line x1="628" y1="516.5" x2="628" y2="529.5" stroke="#4a4a4a" stroke-width="0.8"/>
<rect x="538.6" y="517.6" width="10.4" height="10.8" fill="none" stroke="#454545" stroke-width="1.2"/>
<rect x="540.8" y="517.6" width="5.6" height="3.6" fill="none" stroke="#454545" stroke-width="1"/>
<circle cx="573" cy="521.6" r="3.2" fill="none" stroke="#454545" stroke-width="1.6" stroke-dasharray="1.4 1"/><circle cx="578.4" cy="525.6" r="3" fill="none" stroke="#454545" stroke-width="1.6" stroke-dasharray="1.4 1"/>
<g transform="translate(610.4,522.4)">
<rect x="-1.3" y="-5.9" width="2.6" height="2.8" fill="#fff" transform="rotate(0)"/>
<rect x="-1.3" y="-5.9" width="2.6" height="2.8" fill="#fff" transform="rotate(45)"/>
<rect x="-1.3" y="-5.9" width="2.6" height="2.8" fill="#fff" transform="rotate(90)"/>
<rect x="-1.3" y="-5.9" width="2.6" height="2.8" fill="#fff" transform="rotate(135)"/>
<rect x="-1.3" y="-5.9" width="2.6" height="2.8" fill="#fff" transform="rotate(180)"/>
<rect x="-1.3" y="-5.9" width="2.6" height="2.8" fill="#fff" transform="rotate(225)"/>
<rect x="-1.3" y="-5.9" width="2.6" height="2.8" fill="#fff" transform="rotate(270)"/>
<rect x="-1.3" y="-5.9" width="2.6" height="2.8" fill="#fff" transform="rotate(315)"/>
<circle r="3.8" fill="none" stroke="#fff" stroke-width="1.9"/></g>
<rect x="611" y="523.4" width="6" height="4.8" fill="#fff" rx="0.6" stroke="#262626" stroke-width="0.7"/>
<path d="M640.6,516.8 L640.6,529.8" stroke="#fff" stroke-width="1.6"/><path d="M640.6,517 L649.4,521.2 L640.6,525.4 Z" fill="#fff"/>
<path d="M793,512.8 L736,512.8 A10,10 0 0 0 736,532.8 L793,532.8 Z" fill="#262626"/>
<circle cx="744.2" cy="522.8" r="5.6" fill="none" stroke="#fff" stroke-width="1.3"/>
<text x="744.2" y="526" font-size="8.6" fill="#fff" text-anchor="middle" font-weight="bold">?</text>
<line x1="759.5" y1="516.5" x2="759.5" y2="529.5" stroke="#4a4a4a" stroke-width="0.8"/>
<rect x="772.2" y="519.1" width="10.6" height="1.6" fill="#fff"/>
<rect x="772.2" y="522.1" width="10.6" height="1.6" fill="#fff"/>
<rect x="772.2" y="525.1" width="10.6" height="1.6" fill="#fff"/>
<path d="M772.9,519.5 L771.1,517.3" stroke="#fff" stroke-width="1"/>
<path d="M772.9,526.3 L771.1,528.5" stroke="#fff" stroke-width="1"/>
<path d="M782.1,519.5 L783.9,517.3" stroke="#fff" stroke-width="1"/>
<path d="M782.1,526.3 L783.9,528.5" stroke="#fff" stroke-width="1"/>
<rect x="0" y="536.2" width="793" height="0.8" fill="#2e2e2e"/>
<rect x="0" y="0" width="1.5" height="537" fill="#585858"/>
<path d="M0,532.5 L0,537 L4.5,537 Q1,536.6 0,532.5 Z" fill="#111"/>
<path d="M793,533 Q792,536.6 788,537 L793,537 Z" fill="#fff"/>
<path d="M789.6,0 Q792.6,0.4 793,3.4 L793,0 Z" fill="#111"/>
<path d="M0,0 L0,5 Q0.6,0.8 5,0 Z" fill="#111"/>
</svg>
</body></html>
